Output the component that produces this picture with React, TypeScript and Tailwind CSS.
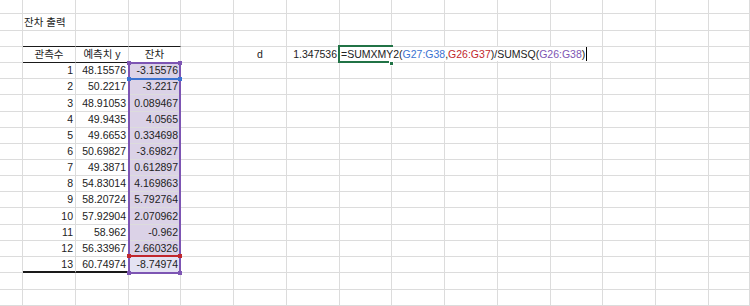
import clsx from "clsx";

// column widths incl. the 1px gridline on the right (A..N), O fills the rest
const colW = [23, 53, 53, 52, 53, 53, 53, 52, 53, 53, 53, 52, 53, 53];
const W: Record<number, string> = { 23: "w-[23px]", 52: "w-[52px]", 53: "w-[53px]" };
const H: Record<number, string> = { 14: "h-[14px]", 16: "h-[16px]", 17: "h-[17px]" };

type Cell = {
  text?: string;
  align?: "left" | "right" | "center";
  edge?: "black" | "thick";
  bg?: string;
};

const pred = [
  "48.15576", "50.2217", "48.91053", "49.9435", "49.6653", "50.69827", "49.3871",
  "54.83014", "58.20724", "57.92904", "58.962", "56.33967", "60.74974",
];
const resid = [
  "-3.15576", "-3.2217", "0.089467", "4.0565", "0.334698", "-3.69827", "0.612897",
  "4.169863", "5.792764", "2.070962", "-0.962", "2.660326", "-8.74974",
];
const dataH = [16, 16, 17, 16, 16, 16, 16, 16, 16, 17, 16, 16, 16];

type Row = { h: number; cells: Record<number, Cell> };

const rows: Row[] = [
  { h: 14, cells: {} },
  { h: 17, cells: { 1: { text: "잔차 출력", align: "left" } } },
  { h: 16, cells: { 1: { edge: "black" }, 2: { edge: "black" }, 3: { edge: "black" } } },
  {
    h: 16,
    cells: {
      1: { text: "관측수", align: "center", edge: "black" },
      2: { text: "예측치 y", align: "center", edge: "black" },
      3: { text: "잔차", align: "center", edge: "black" },
      5: { text: "d", align: "center" },
      6: { text: "1.347536", align: "right" },
    },
  },
  ...pred.map((p, i) => ({
    h: dataH[i],
    cells: {
      1: { text: String(i + 1), align: "right", edge: i === 12 ? "thick" : undefined },
      2: { text: p, align: "right", edge: i === 12 ? "thick" : undefined },
      3: {
        text: resid[i],
        align: "right",
        bg: i === 12 ? "bg-[#e4e3f3]" : "bg-[#dbd2e7]",
      },
    } as Record<number, Cell>,
  })),
  { h: 17, cells: {} },
  { h: 16, cells: {} },
];

function GridCell({ cell, width }: { cell?: Cell; width?: number }) {
  return (
    <div
      className={clsx(
        width ? W[width] : "flex-1",
        "flex h-full shrink-0 items-center border-r border-b border-r-[#dcdcdc] px-[2px] leading-[15px] whitespace-nowrap",
        cell?.edge === "black" && "border-b-[#1a1a1a]",
        cell?.edge === "thick" && "border-b-2 border-b-[#1a1a1a]",
        !cell?.edge && "border-b-[#dcdcdc]",
        cell?.align === "right" && "justify-end",
        cell?.align === "center" && "justify-center",
        cell?.align === "left" && "justify-start pl-[1px]",
        cell?.bg,
      )}
    >
      {cell?.text}
    </div>
  );
}

function Handle({ className }: { className: string }) {
  return <div className={clsx("absolute h-[4px] w-[4px]", className)} />;
}

export default function App() {
  return (
    <div className="relative h-[306px] w-[750px] overflow-hidden bg-white font-['Liberation_Sans','Noto_Sans_CJK_KR',sans-serif] text-[10.5px] text-[#222]">
      {rows.map((r, ri) => (
        <div key={ri} className={clsx(H[r.h], "flex")}>
          {colW.map((w, ci) => (
            <GridCell key={ci} width={w} cell={r.cells[ci]} />
          ))}
          <GridCell />
        </div>
      ))}

      {/* reference ranges of the formula */}
      <div className="absolute top-[62px] left-[128px] h-[212px] w-[53px] border-2 border-[#7d55b3]" />
      <div className="absolute top-[78px] left-[128px] h-[2px] w-[53px] bg-[#3b73d1]" />
      <div className="absolute top-[255px] left-[128px] h-[2px] w-[53px] bg-[#c1272d]" />
      <Handle className="top-[61px] left-[127px] bg-[#7d55b3]" />
      <Handle className="top-[61px] left-[178px] bg-[#7d55b3]" />
      <Handle className="top-[271px] left-[127px] bg-[#7d55b3]" />
      <Handle className="top-[271px] left-[178px] bg-[#7d55b3]" />
      <Handle className="top-[77px] left-[127px] bg-[#3b73d1]" />
      <Handle className="top-[77px] left-[178px] bg-[#3b73d1]" />
      <Handle className="top-[254px] left-[127px] bg-[#c1272d]" />
      <Handle className="top-[254px] left-[178px] bg-[#c1272d]" />

      {/* active cell */}
      <div className="absolute top-[45px] left-[338px] h-[18px] w-[55px] border-2 border-[#217346]" />
      <div className="absolute top-[61px] left-[389px] h-[5px] w-[5px] border border-white bg-[#217346]" />

      {/* in-cell editor */}
      <div className="absolute top-[47px] left-[340px] flex h-[14px] w-[252px] items-center bg-white pl-[1px] leading-[15px] whitespace-nowrap">
        <span>=SUMXMY2(</span>
        <span className="text-[#3b73d1]">G27:G38</span>
        <span>,</span>
        <span className="text-[#c1272d]">G26:G37</span>
        <span>)/SUMSQ(</span>
        <span className="text-[#7d55b3]">G26:G38</span>
        <span>)</span>
        <span className="ml-px h-[14px] w-px bg-black" />
      </div>
    </div>
  );
}
